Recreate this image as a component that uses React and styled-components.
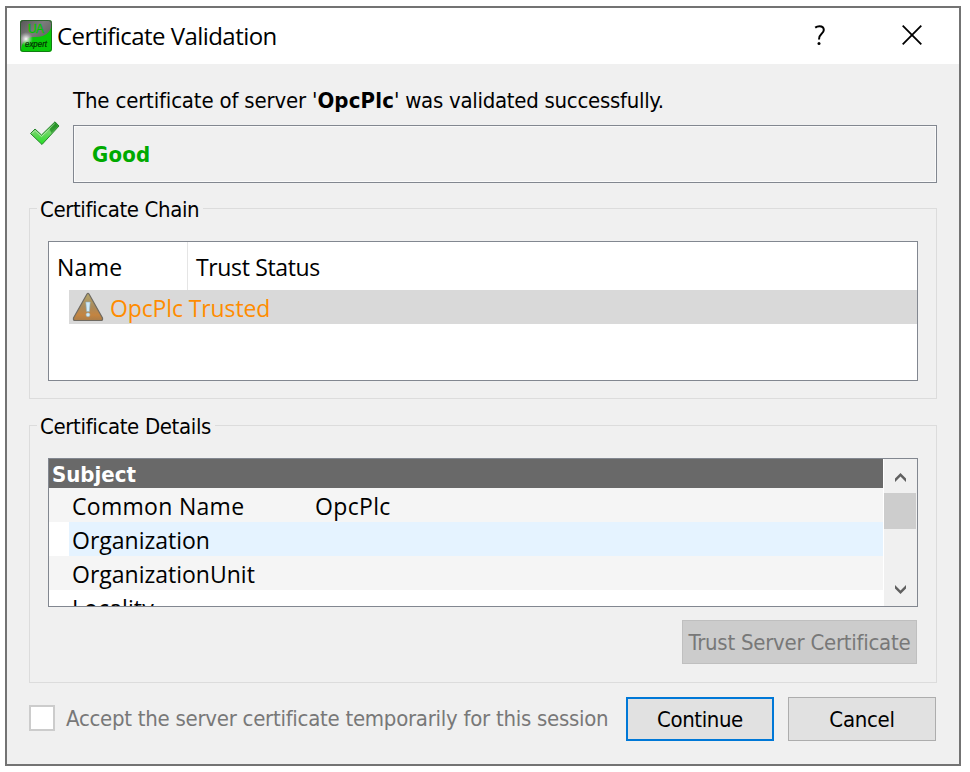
import React from "react";
import styled, { createGlobalStyle } from "styled-components";

const Global = createGlobalStyle`
  * { box-sizing: border-box; }
  html, body { margin: 0; background: #fff; }
`;

const DIALOG_FONT = '"DejaVu Sans Condensed", "DejaVu Sans", sans-serif';
const UI_FONT = '"Open Sans", "Noto Sans", sans-serif';

const Page = styled.div`
  width: 970px;
  height: 772px;
  padding: 6px 9px 6px 5px;
  background: #fff;
  overflow: hidden;
`;
const Window = styled.main`
  width: 956px;
  height: 760px;
  border: 2px solid #737373;
  background: #f0f0f0;
  color: #000;
  font: 22px/30px ${DIALOG_FONT};
`;
const Text = styled.span`
  white-space: pre;
  letter-spacing: ${(p) => p.$track || 0}px;
  font-weight: ${(p) => (p.$bold ? 700 : 400)};
`;
const TitleBar = styled.header`
  display: flex;
  align-items: center;
  height: 56px;
  padding-left: 13px;
  background: #fff;
  font: 24px/32px ${UI_FONT};
`;
const Title = styled.h1`
  flex: 1;
  margin: 0 0 0 5px;
  font: inherit;
  letter-spacing: -0.55px;
`;
const CaptionButton = styled.button`
  display: flex;
  align-items: center;
  justify-content: center;
  width: ${(p) => p.$width}px;
  height: 56px;
  padding: 0 0 2px;
  border: 0;
  background: none;
`;
const Body = styled.div`
  padding: 20px 22px 0;
`;
const Result = styled.section`
  display: flex;
  height: 99px;
`;
const ResultIcon = styled.div`
  width: 44px;
  padding: 37px 0 0 1px;
`;
const ResultMain = styled.div`
  flex: 1;
`;
const Message = styled.p`
  height: 41px;
  margin: 0;
  padding-top: 2px;
`;
const StatusBox = styled.div`
  height: 58px;
  padding: 14px 18px 0;
  border: 1px solid #828790;
  box-shadow: inset 0 0 0 1px #fafafa;
  color: #00aa00;
`;
const Group = styled.section`
  height: ${(p) => p.$height}px;
  margin-top: ${(p) => p.$gap}px;
  padding: 0 18px;
  border: 1px solid #dcdcdc;
`;
const Legend = styled.h2`
  width: fit-content;
  height: 30px;
  margin: -14px 0 16px -11px;
  padding: 0 4px 0 3px;
  background: #f0f0f0;
  font: inherit;
`;
const List = styled.div`
  height: ${(p) => p.$height}px;
  border: 1px solid #828790;
  background: #fff;
  overflow: hidden;
  font: 23px/34px ${UI_FONT};
`;
const ListHead = styled.div`
  display: grid;
  grid-template-columns: 139px 1fr;
  height: 48px;
`;
const HeadCell = styled.div`
  padding: 8px 8px 0;
  border-right: ${(p) => (p.$divided ? "1px solid #e5e5e5" : "0")};
`;
const ChainRow = styled.div`
  display: flex;
  align-items: center;
  gap: 6px;
  height: 34px;
  margin-left: 20px;
  padding-left: 3px;
  background: #d9d9d9;
  color: #ff8c00;
`;
const ChainName = styled.div`
  padding-top: 2px;
`;
const Details = styled.div`
  display: grid;
  grid-template-columns: 1fr 33px;
  column-gap: 1px;
  height: 147px;
`;
const DetailRows = styled.div`
  overflow: hidden;
`;
const SectionRow = styled.div`
  height: 29px;
  padding: 1px 0 0 3px;
  background: #696969;
  color: #fff;
  font: 22px/30px ${DIALOG_FONT};
`;
const DetailRow = styled.div`
  display: grid;
  grid-template-columns: 243px 1fr;
  height: 34px;
  padding: 1px 0 0 3px;
  border-left: 20px solid ${(p) => (p.$tone === "#f5f5f5" ? "#f5f5f5" : "#fff")};
  background: ${(p) => p.$tone};
`;
const ScrollBar = styled.div`
  display: flex;
  flex-direction: column;
  background: #f0f0f0;
`;
const ScrollArrow = styled.div`
  display: flex;
  align-items: center;
  justify-content: center;
  height: 34px;
  padding-top: ${(p) => (p.$top ? 2 : 0)}px;
`;
const Thumb = styled.div`
  width: 32px;
  height: 36px;
  margin-bottom: 43px;
  background: #cdcdcd;
`;
const GroupActions = styled.div`
  display: flex;
  justify-content: flex-end;
  margin-top: 13px;
  padding-right: 1px;
`;
const PushButton = styled.button`
  width: ${(p) => p.$width}px;
  height: 44px;
  padding: 1px 0 0;
  border: ${(p) => (p.$primary ? "2px solid #0078d7" : "1px solid #adadad")};
  background: #e1e1e1;
  color: #000;
  font: inherit;
  white-space: nowrap;

  &:disabled {
    border-color: #bfbfbf;
    background: #cccccc;
    color: #787878;
  }
`;
const Footer = styled.footer`
  display: flex;
  align-items: center;
  margin-top: 14px;
  padding-right: 1px;
`;
const Accept = styled.label`
  display: flex;
  flex: 1;
  align-items: center;
  gap: 11px;
  color: #787878;
`;
const CheckBox = styled.span`
  width: 26px;
  height: 26px;
  margin-bottom: 2px;
  border: 2px solid #cccccc;
  background: #fff;
`;
const Buttons = styled.div`
  display: flex;
  gap: 14px;
`;
const AppLogoText = styled.text`
  font-family: "Liberation Sans", sans-serif;
`;

const AppIcon = () => (
  <svg width="32" height="32" viewBox="0 0 32 32">
    <defs>
      <linearGradient id="gray" x1="0" y1="0" x2="1" y2="1">
        <stop offset="0" stopColor="#555" />
        <stop offset=".4" stopColor="#7c7c7c" />
        <stop offset="1" stopColor="#4a4a4a" />
      </linearGradient>
      <radialGradient id="flare">
        <stop offset="0" stopColor="#fff" />
        <stop offset=".4" stopColor="#ddd" stopOpacity=".7" />
        <stop offset="1" stopColor="#bbb" stopOpacity="0" />
      </radialGradient>
      <clipPath id="tile"><rect width="32" height="32" rx="3" /></clipPath>
    </defs>
    <g clipPath="url(#tile)">
      <rect width="32" height="32" fill="#08c808" />
      <path d="M0 0H32V5Q29 17 16 17Q3 16 1 29L0 32Z" fill="url(#gray)" />
      <AppLogoText x="8" y="13" fontSize="12" fill="#00c400" stroke="#00c400" strokeWidth=".3" textLength="16">UA</AppLogoText>
      <circle cx="6" cy="19" r="7" fill="url(#flare)" />
      <AppLogoText x="5" y="26.5" fontSize="8.5" fontStyle="italic" fill="#042804" stroke="#042804" strokeWidth=".2" textLength="22" lengthAdjust="spacingAndGlyphs">expert</AppLogoText>
    </g>
    <rect x=".5" y=".5" width="31" height="31" rx="3" fill="none" stroke="#155c15" strokeOpacity=".7" />
  </svg>
);

const CheckIcon = () => (
  <svg width="31" height="25" viewBox="0 0 31 25">
    <defs>
      <linearGradient id="check" x1="0" y1="0" x2="0" y2="1">
        <stop offset="0" stopColor="#2a9e2a" />
        <stop offset=".45" stopColor="#72d568" />
        <stop offset="1" stopColor="#22e122" />
      </linearGradient>
    </defs>
    <path d="M.5 12.5L5 8L11.5 14L25 .8L29 5L12 23.5Z" fill="url(#check)" stroke="#27842c" strokeWidth="1" strokeLinejoin="round" />
    <path d="M2 12.5L5 9.5L11.5 15.6L25 2.5" fill="none" stroke="#b4edac" strokeWidth="1" />
    <path d="M19.5 8L25 2L28 5L21.5 12Z" fill="#147d18" opacity=".6" />
  </svg>
);

const WarningIcon = () => (
  <svg width="32" height="30" viewBox="0 0 32 30">
    <defs>
      <linearGradient id="warn" x1="0" y1="0" x2="0" y2="1">
        <stop offset="0" stopColor="#b5a66b" />
        <stop offset=".5" stopColor="#aa8a5b" />
        <stop offset=".8" stopColor="#c48440" />
        <stop offset="1" stopColor="#a97c48" />
      </linearGradient>
    </defs>
    <path d="M15 2Q16 .5 17 2L30.5 26Q31 28.5 29 28.5H3Q1 28.5 1.5 26Z" fill="url(#warn)" stroke="#6f6a61" strokeWidth="1.2" />
    <path d="M13.8 10H18.2L17.4 19.5H14.6Z" fill="#d0ebfa" stroke="#8fb0bd" strokeWidth=".6" />
    <circle cx="16" cy="22.8" r="2" fill="#d0ebfa" stroke="#8fb0bd" strokeWidth=".5" />
  </svg>
);

const Chevron = ({ down }) => (
  <svg width="11" height="9" viewBox="0 0 11 9">
    <path d={down ? "M0 0L5.5 5.5L11 0V3.5L5.5 9L0 3.5Z" : "M0 9L5.5 3.5L11 9V5.5L5.5 0L0 5.5Z"} fill="#606060" />
  </svg>
);

const DETAILS = [
  { name: "Common Name", value: "OpcPlc", tone: "#f5f5f5", track: 0.3 },
  { name: "Organization", value: "", tone: "#e5f3ff", track: 0 },
  { name: "OrganizationUnit", value: "", tone: "#f5f5f5", track: 0 },
  { name: "Locality", value: "", tone: "#ffffff", track: 0.1 },
];

export default function App() {
  return (
    <Page>
      <Global />
      <Window>
        <TitleBar>
          <AppIcon />
          <Title>Certificate Validation</Title>
          <CaptionButton $width={90} aria-label="Help">
            <svg width="12" height="21" viewBox="0 0 12 21">
              <path d="M1.2 2.6Q3 1.2 5.5 1.2Q9.8 1.2 9.8 5Q9.8 7 7.4 9Q5 11 5 14.5" fill="none" stroke="#000" strokeWidth="2" />
              <circle cx="5" cy="18.6" r="1.5" />
            </svg>
          </CaptionButton>
          <CaptionButton $width={94} aria-label="Close">
            <svg width="20" height="20" viewBox="0 0 20 20">
              <path d="M.7.7L19.3 19.3M19.3.7L.7 19.3" stroke="#000" strokeWidth="1.8" />
            </svg>
          </CaptionButton>
        </TitleBar>
        <Body>
          <Result>
            <ResultIcon><CheckIcon /></ResultIcon>
            <ResultMain>
              <Message>
                <Text $track={-0.17}>The certificate of server '</Text>
                <Text $bold $track={0.15}>OpcPlc</Text>
                <Text $track={-0.28}>' was validated successfully.</Text>
              </Message>
              <StatusBox><Text $bold $track={0.2}>Good</Text></StatusBox>
            </ResultMain>
          </Result>

          <Group $height={191} $gap={25}>
            <Legend><Text $track={-0.38}>Certificate Chain</Text></Legend>
            <List $height={140}>
              <ListHead>
                <HeadCell $divided><Text $track={0.3}>Name</Text></HeadCell>
                <HeadCell><Text $track={-0.35}>Trust Status</Text></HeadCell>
              </ListHead>
              <ChainRow>
                <WarningIcon />
                <ChainName><Text $track={-0.12}>OpcPlc Trusted</Text></ChainName>
              </ChainRow>
            </List>
          </Group>

          <Group $height={258} $gap={26}>
            <Legend><Text $track={-0.35}>Certificate Details</Text></Legend>
            <List $height={149}>
              <Details>
                <DetailRows>
                  <SectionRow><Text $bold>Subject</Text></SectionRow>
                  {DETAILS.map((row) => (
                    <DetailRow key={row.name} $tone={row.tone}>
                      <Text $track={row.track}>{row.name}</Text>
                      <Text $track={0.35}>{row.value}</Text>
                    </DetailRow>
                  ))}
                </DetailRows>
                <ScrollBar>
                  <ScrollArrow $top><Chevron /></ScrollArrow>
                  <Thumb />
                  <ScrollArrow><Chevron down /></ScrollArrow>
                </ScrollBar>
              </Details>
            </List>
            <GroupActions>
              <PushButton disabled $width={235}>
                <Text $track={-0.25}>Trust Server Certificate</Text>
              </PushButton>
            </GroupActions>
          </Group>

          <Footer>
            <Accept>
              <CheckBox />
              <Text $track={-0.27}>Accept the server certificate temporarily for this session</Text>
            </Accept>
            <Buttons>
              <PushButton $primary $width={148}><Text $track={-0.4}>Continue</Text></PushButton>
              <PushButton $width={148}><Text $track={-0.3}>Cancel</Text></PushButton>
            </Buttons>
          </Footer>
        </Body>
      </Window>
    </Page>
  );
}
